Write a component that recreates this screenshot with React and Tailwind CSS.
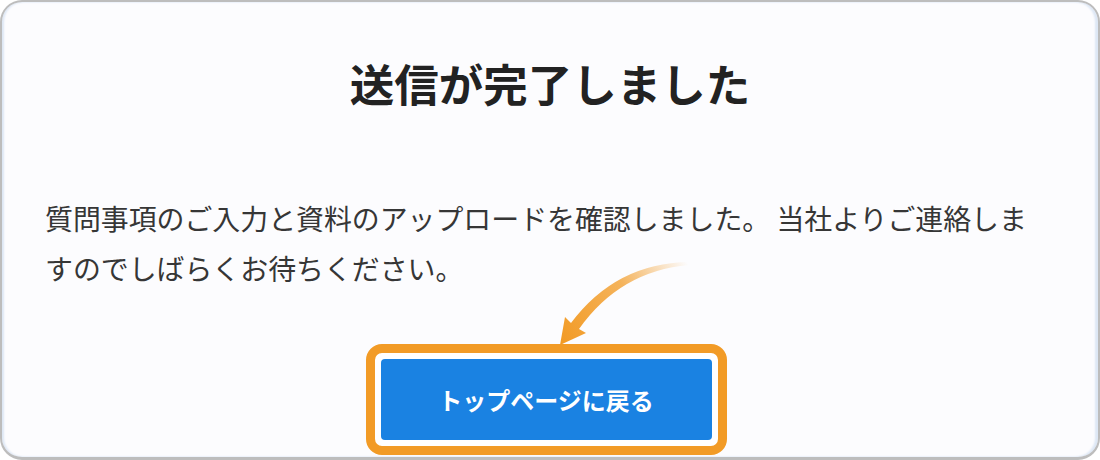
export default function App() {
  return (
    <div
      className="w-[1100px] h-[460px] bg-white"
      style={{ fontFamily: '"Noto Sans CJK JP", "Noto Sans", sans-serif' }}
    >
      <div className="relative h-full w-full flex flex-col items-center rounded-[22px] border-2 border-b-[3px] border-[#bdbdbd] bg-[#fcfcfe] shadow-[inset_2px_0_2px_#dde7f5,inset_-3px_0_2px_#dde7f5]">
        <h1 className="mt-[48px] text-[44.5px] leading-[66px] font-bold text-[#222222]">
          送信が完了しました
        </h1>

        <p className="mt-[77px] self-stretch pl-[43px] pr-[55px] text-[27.9px] leading-[50px] text-[#363636]">
          質問事項のご入力と資料のアップロードを確認しました。 当社よりご連絡しますのでしばらくお待ちください。
        </p>

        <div className="mt-[51px] ml-[-8px] rounded-[16px] border-[9px] border-[#f29b26] bg-white p-[6px]">
          <button className="flex h-[81px] w-[331px] items-center justify-center rounded-[4px] bg-[#1a82e2] text-[24px] font-bold text-white">
            トップページに戻る
          </button>
        </div>

        {/* curved pointer arrow */}
        <svg
          className="absolute left-[538px] top-[248px]"
          width="160"
          height="100"
          viewBox="0 0 160 100"
        >
          <defs>
            <linearGradient id="arrowFade" gradientUnits="userSpaceOnUse" x1="147" y1="12" x2="22" y2="90">
              <stop offset="0" stopColor="#f29b26" stopOpacity="0" />
              <stop offset="0.45" stopColor="#f29b26" stopOpacity="0.75" />
              <stop offset="1" stopColor="#f29b26" stopOpacity="1" />
            </linearGradient>
          </defs>
          <path
            d="M149,12 Q76,13 31,73 L25,67 L20,95 L46,83 L39,79 Q80,21 149,15 Z"
            fill="url(#arrowFade)"
          />
        </svg>
      </div>
    </div>
  )
}
